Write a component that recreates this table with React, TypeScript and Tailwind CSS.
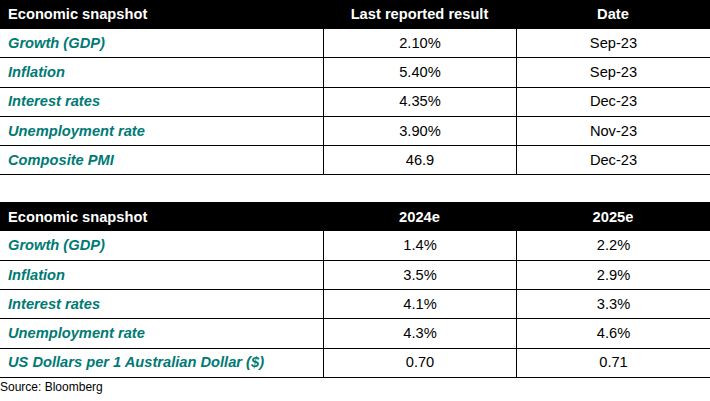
import React from "react";

const teal = "text-[#007a74]";

type Row = [string, string, string];

const t1: Row[] = [
  ["Growth (GDP)", "2.10%", "Sep-23"],
  ["Inflation", "5.40%", "Sep-23"],
  ["Interest rates", "4.35%", "Dec-23"],
  ["Unemployment rate", "3.90%", "Nov-23"],
  ["Composite PMI", "46.9", "Dec-23"],
];

const t2: Row[] = [
  ["Growth (GDP)", "1.4%", "2.2%"],
  ["Inflation", "3.5%", "2.9%"],
  ["Interest rates", "4.1%", "3.3%"],
  ["Unemployment rate", "4.3%", "4.6%"],
  ["US Dollars per 1 Australian Dollar ($)", "0.70", "0.71"],
];

function Table({ head, rows }: { head: Row; rows: Row[] }) {
  return (
    <div className="w-[710px]">
      <div className="grid grid-cols-[323px_193px_194px] h-[29px] bg-black text-white font-bold items-center">
        <div className="pl-[8px]">{head[0]}</div>
        <div className="text-center">{head[1]}</div>
        <div className="text-center">{head[2]}</div>
      </div>
      {rows.map((r, i) => (
        <div
          key={i}
          className="grid grid-cols-[323px_193px_194px] h-[29.3px] border-b border-black"
        >
          <div className={`pl-[8px] flex items-center font-bold italic ${teal}`}>{r[0]}</div>
          <div className="border-l border-black flex items-center justify-center text-black">{r[1]}</div>
          <div className="border-l border-black flex items-center justify-center text-black">{r[2]}</div>
        </div>
      ))}
    </div>
  );
}

export default function App() {
  return (
    <div
      className="w-[710px] h-[401px] bg-white text-[14.67px] leading-none"
      style={{ fontFamily: '"Liberation Sans", Arial, sans-serif' }}
    >
      <Table head={["Economic snapshot", "Last reported result", "Date"]} rows={t1} />
      <div className="h-[27px]" />
      <Table head={["Economic snapshot", "2024e", "2025e"]} rows={t2} />
      <div className="text-[12px] leading-none pt-[3px] text-black">Source: Bloomberg</div>
    </div>
  );
}
